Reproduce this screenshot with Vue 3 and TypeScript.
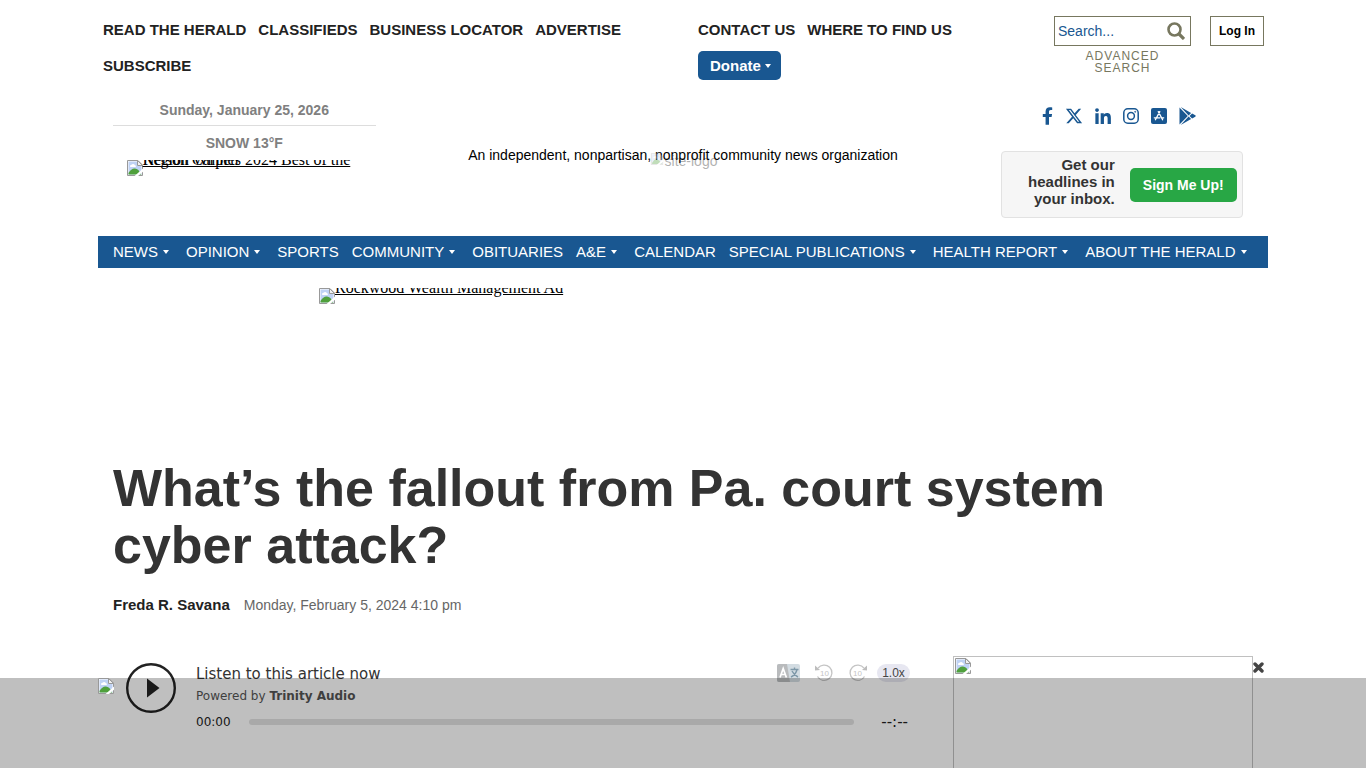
<script setup lang="ts">
import { defineComponent, h, ref } from 'vue'

interface MenuItem {
  label: string
  hasMenu?: boolean
}

const primaryLinks: string[] = ['READ THE HERALD', 'CLASSIFIEDS', 'BUSINESS LOCATOR', 'ADVERTISE', 'SUBSCRIBE']
const contactLinks: string[] = ['CONTACT US', 'WHERE TO FIND US']

const sections: MenuItem[] = [
  { label: 'NEWS', hasMenu: true },
  { label: 'OPINION', hasMenu: true },
  { label: 'SPORTS' },
  { label: 'COMMUNITY', hasMenu: true },
  { label: 'OBITUARIES' },
  { label: 'A&E', hasMenu: true },
  { label: 'CALENDAR' },
  { label: 'SPECIAL PUBLICATIONS', hasMenu: true },
  { label: 'HEALTH REPORT', hasMenu: true },
  { label: 'ABOUT THE HERALD', hasMenu: true },
]

const query = ref('')
const position = ref(0)

const BrokenImage = defineComponent({
  render: () =>
    h('svg', { viewBox: '0 0 16 16', width: 16, height: 16, 'aria-hidden': 'true' }, [
      h('path', { d: 'M.5.5h10.500l4.500 4.500v10.500h-15z', fill: '#fff', stroke: '#999' }),
      h('path', { d: 'M1.500 1.500h9v4.500h4v8.500h-13z', fill: '#bfd2f4' }),
      h('path', { d: 'M3 6.500a1.500 1.500 0 0 1 1.500-1.700 2 2 0 0 1 3.500.4 1 1 0 0 1 .5 1.800H3.500z', fill: '#fff' }),
      h('path', { d: 'M1.500 14.500v-1.500q3-5 6.500-4.500 3.500.5 5 4l1.500 2z', fill: '#4fa03c' }),
      h('path', { d: 'M7 16.500 16.500 8v3.200L10.500 16.500z', fill: '#fff' }),
      h('path', { d: 'M10.500.5v5h5z', fill: '#f1f1f1', stroke: '#999' }),
    ]),
})
</script>

<template>
  <div class="page">
    <header class="container">
      <div class="top-bar">
        <nav class="links" aria-label="Quick links">
          <a v-for="label in primaryLinks" :key="label" href="#">{{ label }}</a>
        </nav>
        <nav class="links contact" aria-label="Contact">
          <a v-for="label in contactLinks" :key="label" href="#">{{ label }}</a>
          <button type="button" class="donate">Donate<span class="caret"></span></button>
        </nav>
        <div class="account">
          <form class="search" @submit.prevent>
            <div class="search-box">
              <input v-model="query" type="text" aria-label="Search" placeholder="Search..." />
              <button type="submit" aria-label="Submit search">
                <svg viewBox="0 0 18 18" width="18" height="18" fill="none" stroke="#77775f">
                  <circle cx="7.500" cy="7.500" r="6" stroke-width="2.600" />
                  <path d="m12 12 5 5" stroke-width="3.200" />
                </svg>
              </button>
            </div>
            <a href="#" class="advanced">ADVANCED SEARCH</a>
          </form>
          <a href="#" class="login">Log In</a>
        </div>
      </div>

      <div class="masthead">
        <div class="masthead-side">
          <div class="date">Sunday, January 25, 2026</div>
          <div class="weather">SNOW 13°F</div>
          <a href="#" class="missing sponsor"><BrokenImage /><span>Nelson Carpets 2024 Best of the Region Winner</span></a>
        </div>
        <div class="brand">
          <a href="#" class="site-logo"><BrokenImage /><span>site-logo</span></a>
          <p>An independent, nonpartisan, nonprofit community news organization</p>
        </div>
        <div class="masthead-side">
          <div class="social">
            <a href="#" aria-label="Facebook">
              <svg viewBox="0 0 320 512" width="11" height="18"><path d="M279 288l14-93h-89v-60c0-25 13-50 53-50h40V7s-37-7-72-7c-73 0-121 44-121 125v70H23v93h81v224h100V288z" /></svg>
            </a>
            <a href="#" aria-label="X">
              <svg viewBox="0 0 24 24" width="18" height="18"><path d="M18.240 2.250h3.310l-7.230 8.260 8.500 11.240h-6.660l-5.210-6.820-5.970 6.820H1.680l7.730-8.840L1.250 2.250h6.830l4.710 6.230zm-1.160 17.520h1.830L7.080 4.130H5.120z" /></svg>
            </a>
            <a href="#" aria-label="LinkedIn">
              <svg viewBox="0 0 448 512" width="16" height="18"><path d="M100 480H7V181h93zM54 140C24 140 0 115 0 86a54 54 0 0 1 108 0c0 29-24 54-54 54zM448 480h-93V334c0-34-1-79-48-79-49 0-56 38-56 77v148h-93V181h89v41h1c13-24 43-48 88-48 94 0 112 62 112 142z" /></svg>
            </a>
            <a href="#" aria-label="Instagram">
              <svg viewBox="0 0 16 16" width="16" height="16" fill="none" stroke="#195791"><rect x=".8" y=".8" width="14.400" height="14.400" rx="4" stroke-width="1.500" /><circle cx="8" cy="8" r="3.400" stroke-width="1.500" /><circle cx="12.200" cy="3.800" r=".5" /></svg>
            </a>
            <a href="#" aria-label="App Store">
              <svg viewBox="0 0 16 16" width="16" height="16"><rect width="16" height="16" rx="2" /><path d="m8.800 3.600-4.400 8.200M7.300 3.600l4.300 8.200M3.300 9.800h5.600m1.700 0h2.100" fill="none" stroke="#fff" stroke-width="1.300" stroke-linecap="round" /></svg>
            </a>
            <a href="#" aria-label="Google Play">
              <svg viewBox="0 0 17 18" width="17" height="18"><path d="M.5.6v16.800L8.800 9zM1.700 0l10.400 5.900-2.500 2.500zM13.100 6.500l3.200 1.800q.8.700 0 1.400l-3.200 1.800L10.500 9zM1.700 18l10.400-5.900-2.500-2.500z" /></svg>
            </a>
          </div>
          <div class="newsletter">
            <span>Get our headlines in your inbox.</span>
            <button type="button">Sign Me Up!</button>
          </div>
        </div>
      </div>

      <nav class="sections" aria-label="Sections">
        <a v-for="item in sections" :key="item.label" href="#">{{ item.label }}<span v-if="item.hasMenu" class="caret"></span></a>
      </nav>
    </header>

    <main class="container main">
      <div class="banner">
        <a href="#" class="missing"><BrokenImage /><span>Rockwood Wealth Management Ad</span></a>
      </div>
      <h1>What’s the fallout from Pa. court system cyber attack?</h1>
      <div class="byline"><strong>Freda R. Savana</strong><time datetime="2024-02-05T16:10">Monday, February 5, 2024 4:10 pm</time></div>

      <div class="columns">
        <section class="player" aria-label="Audio player">
          <button type="button" class="play" aria-label="Play">
            <svg viewBox="0 0 50 50" width="50" height="50"><circle cx="25" cy="25" r="23.800" fill="none" stroke="#222" stroke-width="2.400" /><path d="M21 15.500v19L33.500 25z" fill="#222" /></svg>
          </button>
          <div class="player-body">
            <div class="player-head">
              <div>
                <div class="listen">Listen to this article now</div>
                <div class="powered">Powered by <a href="#">Trinity Audio</a></div>
              </div>
              <div class="tools">
                <button type="button" aria-label="Translate">
                  <svg viewBox="0 0 23 18" width="23" height="18"><rect width="23" height="18" rx="2" fill="#d3dce2" /><path d="M2 0h8l3 18H2q-2 0-2-2V2q0-2 2-2z" fill="#b9bbbd" /><path d="m3 13.500 3.200-9 3.200 9M4.200 10.500h4" fill="none" stroke="#fff" stroke-width="1.700" /><path d="M13.500 5.500h8M17.500 3.500v2M20 5.500q-1 5-6 7.500M15 7q2 4 6 6" fill="none" stroke="#7e98a8" stroke-width="1.400" /></svg>
                </button>
                <button type="button" aria-label="Back 10 seconds">
                  <svg viewBox="0 0 20 18" width="20" height="18"><path d="M4 4.200A7.700 7.700 0 1 1 3.500 12.500" fill="none" stroke="#c4c4c4" stroke-width="1.300" /><path d="M1 1.500v5l5-.5z" fill="#bdbdbd" /><text x="10.500" y="12" text-anchor="middle">10</text></svg>
                </button>
                <button type="button" aria-label="Forward 10 seconds">
                  <svg viewBox="0 0 20 18" width="20" height="18"><path d="M16 4.200A7.700 7.700 0 1 0 16.500 12.500" fill="none" stroke="#c4c4c4" stroke-width="1.300" /><path d="M19 1.500v5l-5-.5z" fill="#bdbdbd" /><text x="9.500" y="12" text-anchor="middle">10</text></svg>
                </button>
                <button type="button" class="speed">1.0x</button>
              </div>
            </div>
            <div class="timeline">
              <span>00:00</span>
              <input v-model="position" type="range" min="0" max="100" aria-label="Playback position" />
              <span class="remaining">--:--</span>
            </div>
          </div>
        </section>
        <aside class="side-ad">
          <a href="#" class="ad-frame" aria-label="Advertisement"><BrokenImage /></a>
          <button type="button" class="dismiss" aria-label="Close advertisement">
            <svg viewBox="0 0 11 11" width="11" height="11"><path d="m2 2 7 7m0-7-7 7" stroke="#444" stroke-width="3.400" stroke-linecap="round" /></svg>
          </button>
        </aside>
      </div>
    </main>

    <div class="sticky-ad">
      <div class="container"><BrokenImage /></div>
    </div>
  </div>
</template>

<style>
body {
  margin: 0;
  background: #fff;
}
</style>

<style scoped>
.page {
  display: flex;
  flex-direction: column;
  min-height: 100vh;
  color: #222;
  font-family: "Liberation Sans", Arial, sans-serif;
}

.page * {
  box-sizing: border-box;
}

.container {
  width: 100%;
  max-width: 1170px;
  margin: 0 auto;
}

a {
  color: inherit;
  text-decoration: none;
}

svg {
  display: block;
  flex: none;
}

button {
  padding: 0;
  border: 0;
  background: none;
  font-family: inherit;
  cursor: pointer;
}

.caret {
  display: inline-block;
  border: 3px solid transparent;
  border-top: 4px solid currentColor;
  border-bottom: 0;
}

.top-bar {
  display: grid;
  grid-template-columns: minmax(0, 1fr) 356px 210px;
  padding: 12px 4px 0 5px;
}

.links {
  display: flex;
  flex-wrap: wrap;
  align-content: flex-start;
  align-items: center;
  column-gap: 12px;
  font-size: 15px;
  font-weight: bold;
  line-height: 36px;
}

.contact {
  padding-right: 16px;
}

.donate {
  display: flex;
  align-items: center;
  gap: 4px;
  height: 29px;
  margin: 3px 0 4px;
  padding: 0 10px 0 12px;
  border-radius: 5px;
  background: #195791;
  color: #fff;
  font-size: 15px;
  font-weight: bold;
}

.account {
  display: flex;
  align-items: flex-start;
  justify-content: space-between;
  padding-top: 4px;
}

.search {
  width: 137px;
}

.search-box {
  display: flex;
  align-items: center;
  height: 30px;
  padding: 0 5px 0 3px;
  border: 1px solid #77775f;
}

.search-box input {
  flex: 1;
  min-width: 0;
  padding: 0;
  border: 0;
  outline: 0;
  background: none;
  font: 14px "Liberation Sans", Arial, sans-serif;
}

.search-box input::placeholder {
  color: #195791;
  opacity: 1;
}

.advanced {
  display: block;
  margin: 4px 24px 0;
  color: #77775f;
  font-size: 12px;
  letter-spacing: 1px;
  line-height: 12px;
  text-align: center;
}

.login {
  width: 54px;
  border: 1px solid #77775f;
  color: #000;
  font-size: 12px;
  font-weight: bold;
  line-height: 28px;
  text-align: center;
}

.masthead {
  display: grid;
  grid-template-columns: 1fr 2fr 1fr;
  min-height: 152px;
  padding-top: 11px;
}

.masthead-side {
  padding: 0 15px;
}

.date,
.weather {
  color: #808080;
  font-size: 14px;
  font-weight: bold;
  line-height: 30px;
  text-align: center;
}

.date {
  border-bottom: 1px solid #ddd;
}

.weather {
  line-height: 34px;
}

.missing {
  display: flex;
  height: 16px;
  overflow: hidden;
  color: #000;
  font-family: "Liberation Serif", "Times New Roman", serif;
  font-size: 16px;
  line-height: 0;
  text-decoration: underline;
}

.sponsor {
  max-width: 235px;
  margin: 0 auto;
}

.brand {
  display: grid;
  justify-items: center;
  align-content: start;
  padding-top: 52px;
}

.brand > * {
  grid-area: 1 / 1;
}

.brand p {
  margin: 0;
  color: #000;
  font-size: 14px;
  line-height: 16px;
}

.site-logo {
  display: flex;
  align-items: flex-end;
  height: 20px;
  margin-top: 4px;
  opacity: 0.35;
  font-size: 14px;
  line-height: 20px;
}

.site-logo svg {
  height: 12px;
  margin-bottom: 6px;
}

.social {
  display: flex;
  align-items: center;
  justify-content: center;
  gap: 12px;
  height: 18px;
  margin: 12px 0 26px;
  padding-right: 6px;
  fill: #195791;
}

.newsletter {
  display: flex;
  align-items: center;
  justify-content: flex-end;
  gap: 15px;
  max-width: 242px;
  height: 67px;
  margin: 0 auto;
  padding: 0 5px 0 12px;
  border: 1px solid #e2e2e2;
  border-radius: 4px;
  background: #f6f6f6;
}

.newsletter span {
  padding-bottom: 6px;
  color: #333;
  font-size: 15px;
  font-weight: bold;
  line-height: 17px;
  text-align: right;
}

.newsletter button {
  flex: none;
  width: 107px;
  height: 34px;
  border-radius: 5px;
  background: #28a745;
  color: #fff;
  font-size: 14px;
  font-weight: bold;
}

.sections {
  display: flex;
  flex-wrap: wrap;
  gap: 0 13px;
  padding: 0 15px;
  background: #195791;
  color: #fff;
  font-size: 15px;
  line-height: 32px;
}

.sections .caret {
  margin: 0 4px 3px 5px;
}

.main {
  display: flex;
  flex: 1;
  flex-direction: column;
}

.banner {
  display: flex;
  justify-content: center;
  min-height: 192px;
  padding-top: 20px;
}

.banner a {
  width: 728px;
}

h1 {
  margin: 0 15px;
  color: #333;
  font-size: 52px;
  line-height: 57px;
}

.byline {
  display: flex;
  gap: 14px;
  margin: 21px 15px 41px;
  font-size: 15px;
  line-height: 20px;
}

.byline time {
  color: #666;
  font-size: 14px;
}

.columns {
  display: flex;
  flex: 1;
  justify-content: space-between;
  gap: 30px;
  padding: 0 4px 0 28px;
}

.player {
  display: flex;
  flex: 1;
  align-items: flex-start;
  gap: 20px;
  max-width: 784px;
  padding-top: 7px;
  font-family: "DejaVu Sans", Verdana, sans-serif;
}

.player-body {
  flex: 1;
}

.player-head {
  display: flex;
  align-items: flex-start;
  justify-content: space-between;
}

.listen {
  color: #333;
  font-size: 15px;
  line-height: 22px;
}

.powered {
  color: #555;
  font-size: 12px;
  line-height: 22px;
}

.powered a {
  font-weight: bold;
}

.tools {
  display: flex;
  gap: 14px;
  padding-top: 1px;
}

.tools text {
  fill: #c4c4c4;
  font-family: "Liberation Sans", Arial, sans-serif;
  font-size: 8px;
}

.tools .speed {
  width: 33px;
  height: 18px;
  margin-left: -5px;
  border-radius: 9px;
  background: #e7e7f1;
  color: #444;
  font-family: "Liberation Sans", Arial, sans-serif;
  font-size: 12px;
}

.timeline {
  display: flex;
  align-items: center;
  gap: 18px;
  margin-top: 5px;
  padding-right: 2px;
  font-size: 12px;
  line-height: 20px;
}

.timeline .remaining {
  margin-left: 9px;
  font-size: 15px;
}

.timeline input {
  flex: 1;
  min-width: 0;
  height: 6px;
  margin: 0;
  border-radius: 3px;
  background: #e2e2e2;
  appearance: none;
}

.timeline input::-webkit-slider-thumb {
  width: 1px;
  height: 1px;
  appearance: none;
}

.side-ad {
  display: flex;
  align-items: stretch;
}

.ad-frame {
  width: 300px;
  padding: 1px;
  border: 1px solid #c0c0c0;
  border-bottom: 0;
}

.dismiss {
  align-self: flex-start;
  padding-top: 6px;
}

.sticky-ad {
  position: fixed;
  right: 0;
  bottom: 0;
  left: 0;
  height: 90px;
  background: rgba(0, 0, 0, 0.25);
}
</style>
